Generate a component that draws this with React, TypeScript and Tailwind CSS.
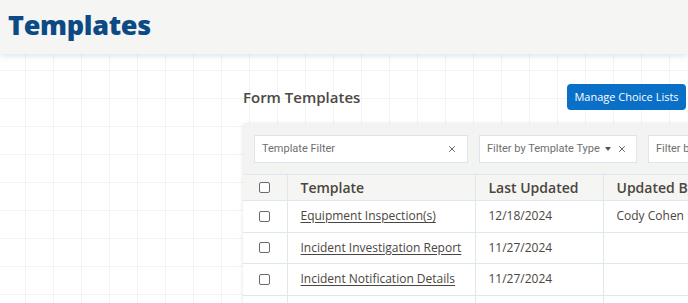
import { X } from 'lucide-react';

const rows = [
  { name: 'Equipment Inspection(s)', date: '12/18/2024', by: 'Cody Cohen' },
  { name: 'Incident Investigation Report', date: '11/27/2024', by: '' },
  { name: 'Incident Notification Details', date: '11/27/2024', by: '' },
  { name: '', date: '', by: '' },
];

function Checkbox() {
  return <span className="block w-[11px] h-[11px] border-[1.5px] border-[#6b6b6b] rounded-[2px] bg-white" />;
}

export default function App() {
  return (
    <div className="w-[688px] h-[303px] overflow-hidden flex flex-col bg-white font-['Open_Sans',sans-serif] text-[#4a4640]">
      {/* Page header */}
      <header className="h-[54px] shrink-0 bg-[#f5f5f3] flex items-center px-2 relative z-10 shadow-[0_2px_6px_rgba(120,150,170,0.25)]">
        <h1 className="text-[27px] font-extrabold text-[#0c4a85] tracking-[-0.3px] leading-none -mt-[6px]">
          Templates
        </h1>
      </header>

      {/* Grid canvas */}
      <main className="flex-1 flex bg-[linear-gradient(to_right,#f1f3f4_1px,transparent_1px),linear-gradient(to_bottom,#f1f3f4_1px,transparent_1px)] bg-[size:28px_28px] bg-[position:25px_16px]">
        <div className="w-[243px] shrink-0" />
        <div className="flex-1 flex flex-col pt-[30px] min-w-0">
          <div className="flex items-center justify-between pr-[2px]">
            <h2 className="text-[15px] font-semibold text-[#4c4842]">Form Templates</h2>
            <button className="h-[26px] w-[119px] rounded bg-[#0a6fc7] text-white text-[11px] font-medium">
              Manage Choice Lists
            </button>
          </div>

          {/* Card */}
          <div className="mt-[14px] w-[600px] shrink-0 bg-[#f3f3f1] shadow-[0_0_4px_rgba(0,0,0,0.12)] rounded-tl-[3px]">
            <div className="flex gap-[11px] p-[11px] text-[11px] font-['Roboto',sans-serif] text-[#6f6f6f]">
              <div className="w-[214px] shrink-0 h-[28px] bg-white border border-[#dbe6ea] flex items-center justify-between pl-[7px] pr-[10px]">
                <span>Template Filter</span>
                <X size={10} strokeWidth={2.2} className="text-[#555]" />
              </div>
              <div className="w-[158px] shrink-0 h-[28px] bg-white border border-[#dbe6ea] flex items-center pl-[7px] pr-[9px]">
                <span className="flex-1">Filter by Template Type</span>
                <span className="w-0 h-0 border-l-[3.5px] border-r-[3.5px] border-t-[4px] border-l-transparent border-r-transparent border-t-[#555] mr-[6px]" />
                <X size={10} strokeWidth={2.2} className="text-[#555]" />
              </div>
              <div className="w-[150px] shrink-0 h-[28px] bg-white border border-[#dbe6ea] flex items-center pl-[7px]">
                <span>Filter by Updated By</span>
              </div>
            </div>

            <table className="w-full border-collapse text-[12px] table-fixed">
              <colgroup>
                <col className="w-[44px]" />
                <col className="w-[188px]" />
                <col className="w-[128px]" />
                <col />
              </colgroup>
              <thead>
                <tr className="h-[26px] bg-[#f5f5f3] text-[14px] font-semibold text-[#4a4640]">
                  <th className="border border-l-0 border-[#dde8ec]">
                    <div className="flex justify-center"><Checkbox /></div>
                  </th>
                  <th className="border border-[#dde8ec] text-left pl-[13px] font-semibold">Template</th>
                  <th className="border border-[#dde8ec] text-left pl-[13px] font-semibold">Last Updated</th>
                  <th className="border border-[#dde8ec] text-left pl-[13px] font-semibold whitespace-nowrap">Updated By</th>
                </tr>
              </thead>
              <tbody className="bg-white">
                {rows.map((r, i) => (
                  <tr key={i} className="h-[31.5px]">
                    <td className="border border-l-0 border-[#dde8ec]">
                      {r.name && <div className="flex justify-center"><Checkbox /></div>}
                    </td>
                    <td className="border border-[#dde8ec] pl-[13px]">
                      <a href="#" className="underline underline-offset-2 text-[#4a4640] whitespace-nowrap">{r.name}</a>
                    </td>
                    <td className="border border-[#dde8ec] pl-[13px]">{r.date}</td>
                    <td className="border border-[#dde8ec] pl-[13px] whitespace-nowrap">{r.by}</td>
                  </tr>
                ))}
              </tbody>
            </table>
          </div>
        </div>
      </main>
    </div>
  );
}
